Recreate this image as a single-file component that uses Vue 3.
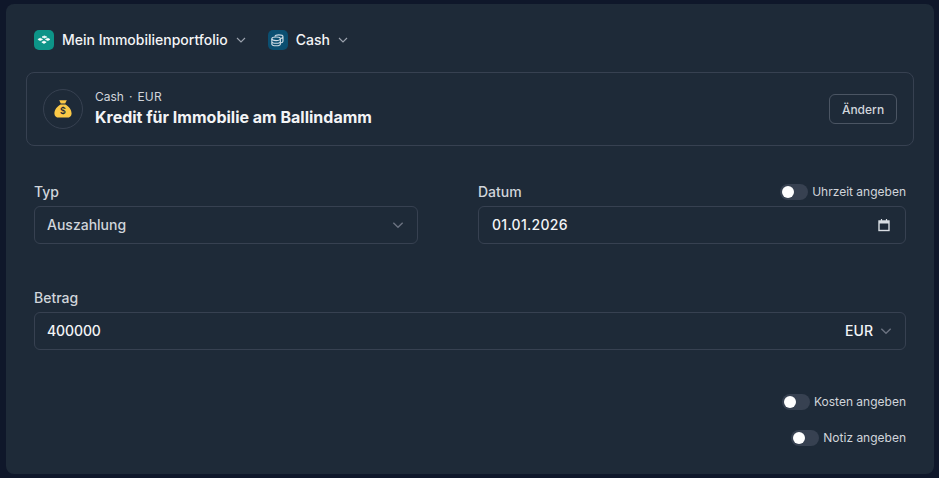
<script setup>
const toggles = ['Kosten angeben', 'Notiz angeben']
</script>

<template>
  <main class="panel">
    <header class="crumbs">
      <div class="crumb">
        <span class="tile teal">
          <svg width="14" height="10" viewBox="0 0 14 10" fill="#fff" stroke="#fff" stroke-width="0.7" stroke-linejoin="round">
            <path d="M7.4 .9 9.8 2 7.4 3.1 5 2zM3.2 3.2 5.6 4.4 3.2 5.6 .9 4.4zM10.8 3.2 13 4.4 10.8 5.6 8.4 4.4zM7 6 9.2 7.2 7 8.4 4.8 7.2z" />
          </svg>
        </span>
        <span class="crumb-text">Mein Immobilienportfolio</span>
        <svg class="chev" width="12" height="12" viewBox="0 0 12 12"><path d="M2 4l4 4 4-4" /></svg>
      </div>
      <div class="crumb">
        <span class="tile blue">
          <svg width="13" height="13" viewBox="0 0 14 14" fill="none" stroke="#cfdde6" stroke-width="1.2">
            <ellipse cx="5.5" cy="5.2" rx="4.6" ry="1.9" />
            <path d="M.9 5.2v5.6c0 1.1 2.1 1.9 4.6 1.9s4.6-.8 4.6-1.9V5.2M.9 8c0 1.1 2.1 1.9 4.6 1.9s4.6-.8 4.6-1.9" />
            <path d="M4 2.6C4.4 1.7 6.1 1 8.2 1c2.6 0 4.7.8 4.7 1.9v5c0 .8-1.1 1.5-2.8 1.8M10.2 4.9c1.5-.2 2.7-.9 2.7-2" />
          </svg>
        </span>
        <span class="crumb-text">Cash</span>
        <svg class="chev" width="12" height="12" viewBox="0 0 12 12"><path d="M2 4l4 4 4-4" /></svg>
      </div>
    </header>

    <section class="card">
      <span class="avatar">
        <svg width="20" height="20" viewBox="0 0 20 20">
          <path fill="#fbc947" d="M6.2 1.2h7.6l-1.6 3.4H7.8zM7.6 5.4h4.8c3.5 1.8 6.2 5.3 6.2 9 0 2.7-1.8 4.2-4.6 4.2H6c-2.8 0-4.6-1.5-4.6-4.2 0-3.7 2.7-7.2 6.2-9z" />
          <text x="10" y="15.2" text-anchor="middle" class="dollar">$</text>
        </svg>
      </span>
      <div class="card-body">
        <div class="meta"><span>Cash</span><span class="dot">·</span><span>EUR</span></div>
        <div class="title">Kredit für Immobilie am Ballindamm</div>
      </div>
      <button class="change" type="button">Ändern</button>
    </section>

    <section class="row first">
      <div class="field typ">
        <div class="label-row"><label>Typ</label></div>
        <div class="control">
          <span class="value muted">Auszahlung</span>
          <svg class="chev dim" width="14" height="14" viewBox="0 0 12 12"><path d="M2 4l4 4 4-4" /></svg>
        </div>
      </div>
      <div class="field date">
        <div class="label-row">
          <label>Datum</label>
          <span class="toggle-line">
            <span class="switch"><i></i></span>
            <span class="toggle-label">Uhrzeit angeben</span>
          </span>
        </div>
        <div class="control date-control">
          <span class="value date-value">01.01.2026</span>
          <svg width="14" height="14" viewBox="0 0 14 14" fill="none" stroke="#d8dde3">
            <rect x="2" y="3" width="10" height="9.5" stroke-width="1.4" />
            <path d="M2 4.2h10" stroke-width="2.6" />
            <path d="M4.5 1v2M9.5 1v2" stroke-width="1.2" />
          </svg>
        </div>
      </div>
    </section>

    <section class="field amount">
      <div class="label-row"><label>Betrag</label></div>
      <div class="control">
        <span class="value amount-value">400000</span>
        <span class="suffix">
          <span class="cur">EUR</span>
          <svg class="chev dim" width="14" height="14" viewBox="0 0 12 12"><path d="M2 4l4 4 4-4" /></svg>
        </span>
      </div>
    </section>

    <section class="options">
      <span v-for="t in toggles" :key="t" class="toggle-line">
        <span class="switch"><i></i></span>
        <span class="toggle-label">{{ t }}</span>
      </span>
    </section>
  </main>
</template>

<style>
html, body { margin: 0; background: #0f172a; }
</style>

<style scoped>
.panel {
  box-sizing: border-box;
  width: 928px;
  height: 470px;
  margin: 4px 0 0 6px;
  padding: 26px 20px 0;
  background: #1e2a38;
  border-radius: 8px;
  font-family: Inter, "Noto Sans", sans-serif;
  color: #fff;
}
.crumbs { display: flex; gap: 21px; padding-left: 8px; height: 20px; }
.crumb { display: flex; align-items: center; }
.tile {
  width: 20px; height: 20px; border-radius: 5px;
  display: flex; align-items: center; justify-content: center;
}
.teal { background: #0d9488; }
.blue { background: #0b4f71; }
.crumb-text { margin-left: 8px; font-size: 14px; font-weight: 500; line-height: 20px; color: #f3f4f6; }
.chev { fill: none; stroke: #9ca3af; stroke-width: 1.1; margin-left: 7px; }
.chev.dim { stroke: #6b7280; margin-left: 0; stroke-width: 1.2; }

.card {
  box-sizing: border-box;
  height: 74px;
  margin-top: 22px;
  padding: 0 16px;
  display: flex; align-items: center;
  border: 1px solid #374151;
  border-radius: 8px;
}
.avatar {
  box-sizing: border-box;
  width: 40px; height: 40px; border-radius: 50%;
  border: 1px solid #374151;
  display: flex; align-items: center; justify-content: center;
}
.dollar { font-size: 9px; font-weight: 600; fill: #1f2937; font-family: Inter, sans-serif; }
.card-body { margin-left: 12px; flex: 1; margin-top: -2px; }
.meta { display: flex; gap: 5px; font-size: 12px; line-height: 16px; color: #d1d5db; }
.meta span:last-child { letter-spacing: 0.2px; }
.title { margin-top: 2px; font-size: 16px; font-weight: 700; line-height: 20px; color: #f3f4f6; }
.change {
  box-sizing: border-box;
  height: 30px; width: 68px; padding: 0;
  background: none;
  border: 1px solid #4b5563; border-radius: 6px;
  color: #d1d5db;
  font: 500 12px Inter, sans-serif;
}

.row { display: grid; grid-template-columns: 384px 428px; gap: 60px; margin: 0 8px; }
.first { margin-top: 36px; }
.label-row { display: flex; justify-content: space-between; align-items: center; height: 20px; margin-bottom: 4px; }
label { font-size: 14px; font-weight: 500; line-height: 20px; color: #d1d5db; }
.control {
  box-sizing: border-box;
  height: 38px; padding: 0 12px 2px;
  display: flex; align-items: center; justify-content: space-between;
  border: 1px solid #374151; border-radius: 6px;
}
.control svg { position: relative; top: 1px; }
.date-control { padding: 0 14px 2px 13px; }
.value { font-size: 14px; font-weight: 500; color: #f3f4f6; }
.date-value { letter-spacing: 0.3px; }
.amount-value { letter-spacing: -0.1px; }
.value.muted { color: #d1d5db; }
.amount { margin: 44px 8px 0; }
.suffix { display: flex; align-items: center; gap: 6px; }
.cur { font-size: 14px; font-weight: 500; color: #f3f4f6; }

.options { margin: 44px 8px 0; display: flex; flex-direction: column; align-items: flex-end; gap: 20px; }
.toggle-line { display: flex; align-items: center; height: 16px; }
.switch {
  box-sizing: border-box;
  width: 28px; height: 16px; padding: 2px; border-radius: 8px;
  background: #374151;
  display: block;
}
.switch i { display: block; width: 12px; height: 12px; border-radius: 50%; background: #fff; }
.toggle-label { margin-left: 4px; font-size: 12px; line-height: 16px; color: #d1d5db; }
</style>
